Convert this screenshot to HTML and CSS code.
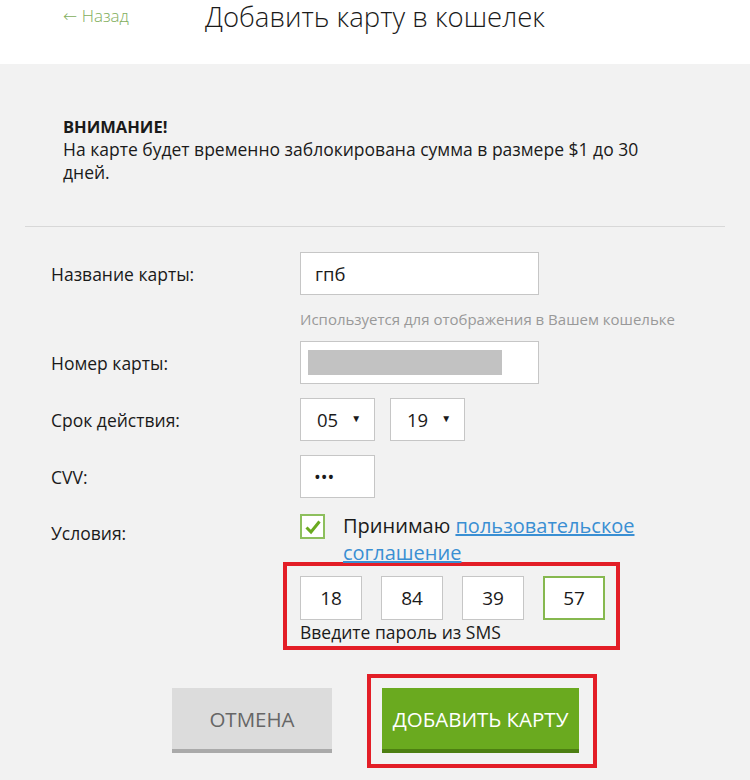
FILE: index.html
```html
<!DOCTYPE html>
<html lang="ru">
<head>
<meta charset="utf-8">
<title>Добавить карту в кошелек</title>
<link rel="stylesheet" href="styles.css">
</head>
<body>
<header class="topbar">
  <a class="back" href="#"><span class="arrow">←</span> Назад</a>
  <h1 class="title">Добавить карту в кошелек</h1>
</header>
<main class="page">
  <div class="notice">
    <strong class="notice-head">ВНИМАНИЕ!</strong>
    <p class="notice-text">На карте будет временно заблокирована сумма в размере $1 до 30 дней.</p>
  </div>
  <hr class="sep">
  <form class="form">
    <div class="row">
      <label class="label">Название карты:</label>
      <div class="field input wide">гпб</div>
    </div>
    <div class="hint">Используется для отображения в Вашем кошельке</div>
    <div class="row row-card">
      <label class="label">Номер карты:</label>
      <div class="field input wide"><span class="masked"></span></div>
    </div>
    <div class="row row-gap">
      <label class="label">Срок действия:</label>
      <div class="selects">
        <div class="field select"><span>05</span><span class="caret">▼</span></div>
        <div class="field select"><span>19</span><span class="caret">▼</span></div>
      </div>
    </div>
    <div class="row row-gap">
      <label class="label">CVV:</label>
      <div class="field input short dots">•••</div>
    </div>
    <div class="row row-terms">
      <label class="label label-terms">Условия:</label>
      <div class="terms">
        <span class="checkbox">
          <svg viewBox="0 0 20 20" width="20" height="20"><path d="M3.5 10.5 L8 15 L16.5 4.5" fill="none" stroke="#6aaa1f" stroke-width="3"/></svg>
        </span>
        <span class="terms-text">Принимаю <a href="#" class="link">пользовательское соглашение</a></span>
      </div>
    </div>
    <div class="sms-box">
      <div class="sms-inputs">
        <div class="field sms">18</div>
        <div class="field sms">84</div>
        <div class="field sms">39</div>
        <div class="field sms active">57</div>
      </div>
      <div class="sms-label">Введите пароль из SMS</div>
    </div>
    <div class="actions">
      <button type="button" class="btn btn-cancel">ОТМЕНА</button>
      <div class="highlight">
        <button type="button" class="btn btn-add">ДОБАВИТЬ КАРТУ</button>
      </div>
    </div>
  </form>
</main>
</body>
</html>
```

FILE: styles.css
```css
* { box-sizing: border-box; }
html, body { margin: 0; padding: 0; }
body {
  font-family: "Open Sans", "Noto Sans", sans-serif;
  color: #1a1a1a;
  background: #f2f2f2;
  width: 750px;
  height: 780px;
  overflow: hidden;
}
.topbar {
  background: #fff;
  height: 64px;
  display: flex;
  align-items: flex-start;
  padding-left: 63px;
}
.back {
  color: #7fae5c;
  text-decoration: none;
  font-size: 17px;
  font-weight: 300;
  line-height: 22px;
  margin-top: 5px;
  width: 142px;
}
.arrow {
  font-family: "DejaVu Sans", sans-serif;
  font-size: 17px;
  font-weight: 300;
}
.title {
  margin: 0;
  font-size: 27.5px;
  font-weight: 300;
  line-height: 38px;
  margin-top: -2px;
  color: #1a1a1a;
}
.page {
  background: #f2f2f2;
}
.notice {
  padding: 51px 0 0 63px;
  font-size: 17.5px;
  line-height: 23px;
  height: 162px;
}
.notice-head { font-weight: 700; display: block; font-size: 16.5px; }
.notice-text { margin: 0; width: 600px; }
.sep {
  margin: 0 25px;
  border: 0;
  border-top: 1px solid #d8d8d8;
  height: 0;
}
.form {
  padding-left: 51px;
  padding-top: 25px;
}
.row {
  display: flex;
  align-items: center;
}
.label {
  width: 249px;
  font-size: 17.5px;
}
.field {
  background: #fff;
  border: 1px solid #c6c6c6;
  height: 43px;
  display: flex;
  align-items: center;
  font-size: 18.5px;
}
.input { padding-left: 14px; }
.wide { width: 239px; }
.short { width: 75px; }
.masked {
  display: block;
  width: 194px;
  height: 25px;
  background: #c2c2c2;
  margin-left: -7px;
}
.hint {
  margin-left: 249px;
  font-size: 15px;
  color: #999;
  line-height: 20px;
  margin-top: 14px;
}
.row-card { margin-top: 12px; }
.row-gap { margin-top: 14px; }
.selects { display: flex; gap: 15px; }
.select {
  width: 75px;
  padding-left: 16px;
  justify-content: flex-start;
}
.select .caret {
  font-size: 10px;
  margin-left: 13px;
  margin-top: -4px;
}
.dots { font-size: 18px; padding-left: 13px; }
.row-terms {
  margin-top: 16px;
  align-items: flex-start;
}
.label-terms { margin-top: 7px; }
.terms {
  display: flex;
  align-items: flex-start;
  gap: 18px;
}
.checkbox {
  width: 25px;
  height: 25px;
  border: 2px solid #8dbf5d;
  background: #fff;
  display: flex;
  align-items: center;
  justify-content: center;
  flex: none;
}
.terms-text {
  font-size: 20px;
  line-height: 27px;
  width: 300px;
  margin-top: -2px;
}
.link { color: #3a8fd3; text-decoration: underline; }
.sms-box {
  margin-left: 232px;
  margin-top: -4px;
  width: 337px;
  border: 4px solid #e31e27;
  padding: 10px 0 0 13px;
  height: 88px;
}
.sms-inputs { display: flex; gap: 19px; }
.sms {
  width: 62px;
  height: 44px;
  justify-content: center;
  font-size: 19px;
}
.sms.active { border: 2px solid #86b84f; }
.sms-label {
  font-size: 17.5px;
  line-height: 22px;
  margin-top: 1px;
}
.actions {
  display: flex;
  align-items: flex-start;
  margin-left: 121px;
  margin-top: 24px;
}
.btn {
  border: 0;
  font-family: inherit;
  font-size: 20.5px;
  height: 65px;
  cursor: pointer;
}
.btn-cancel {
  width: 160px;
  margin-top: 14px;
  background: #dcdcdc;
  border-bottom: 4px solid #aaa;
  color: #666;
}
.highlight {
  margin-left: 35px;
  border: 4px solid #e31e27;
  padding: 10px 14px 11px 11px;
}
.btn-add {
  width: 197px;
  background: #6aaa1f;
  border-bottom: 4px solid #4d7f12;
  color: #fff;
  display: block;
}
```
